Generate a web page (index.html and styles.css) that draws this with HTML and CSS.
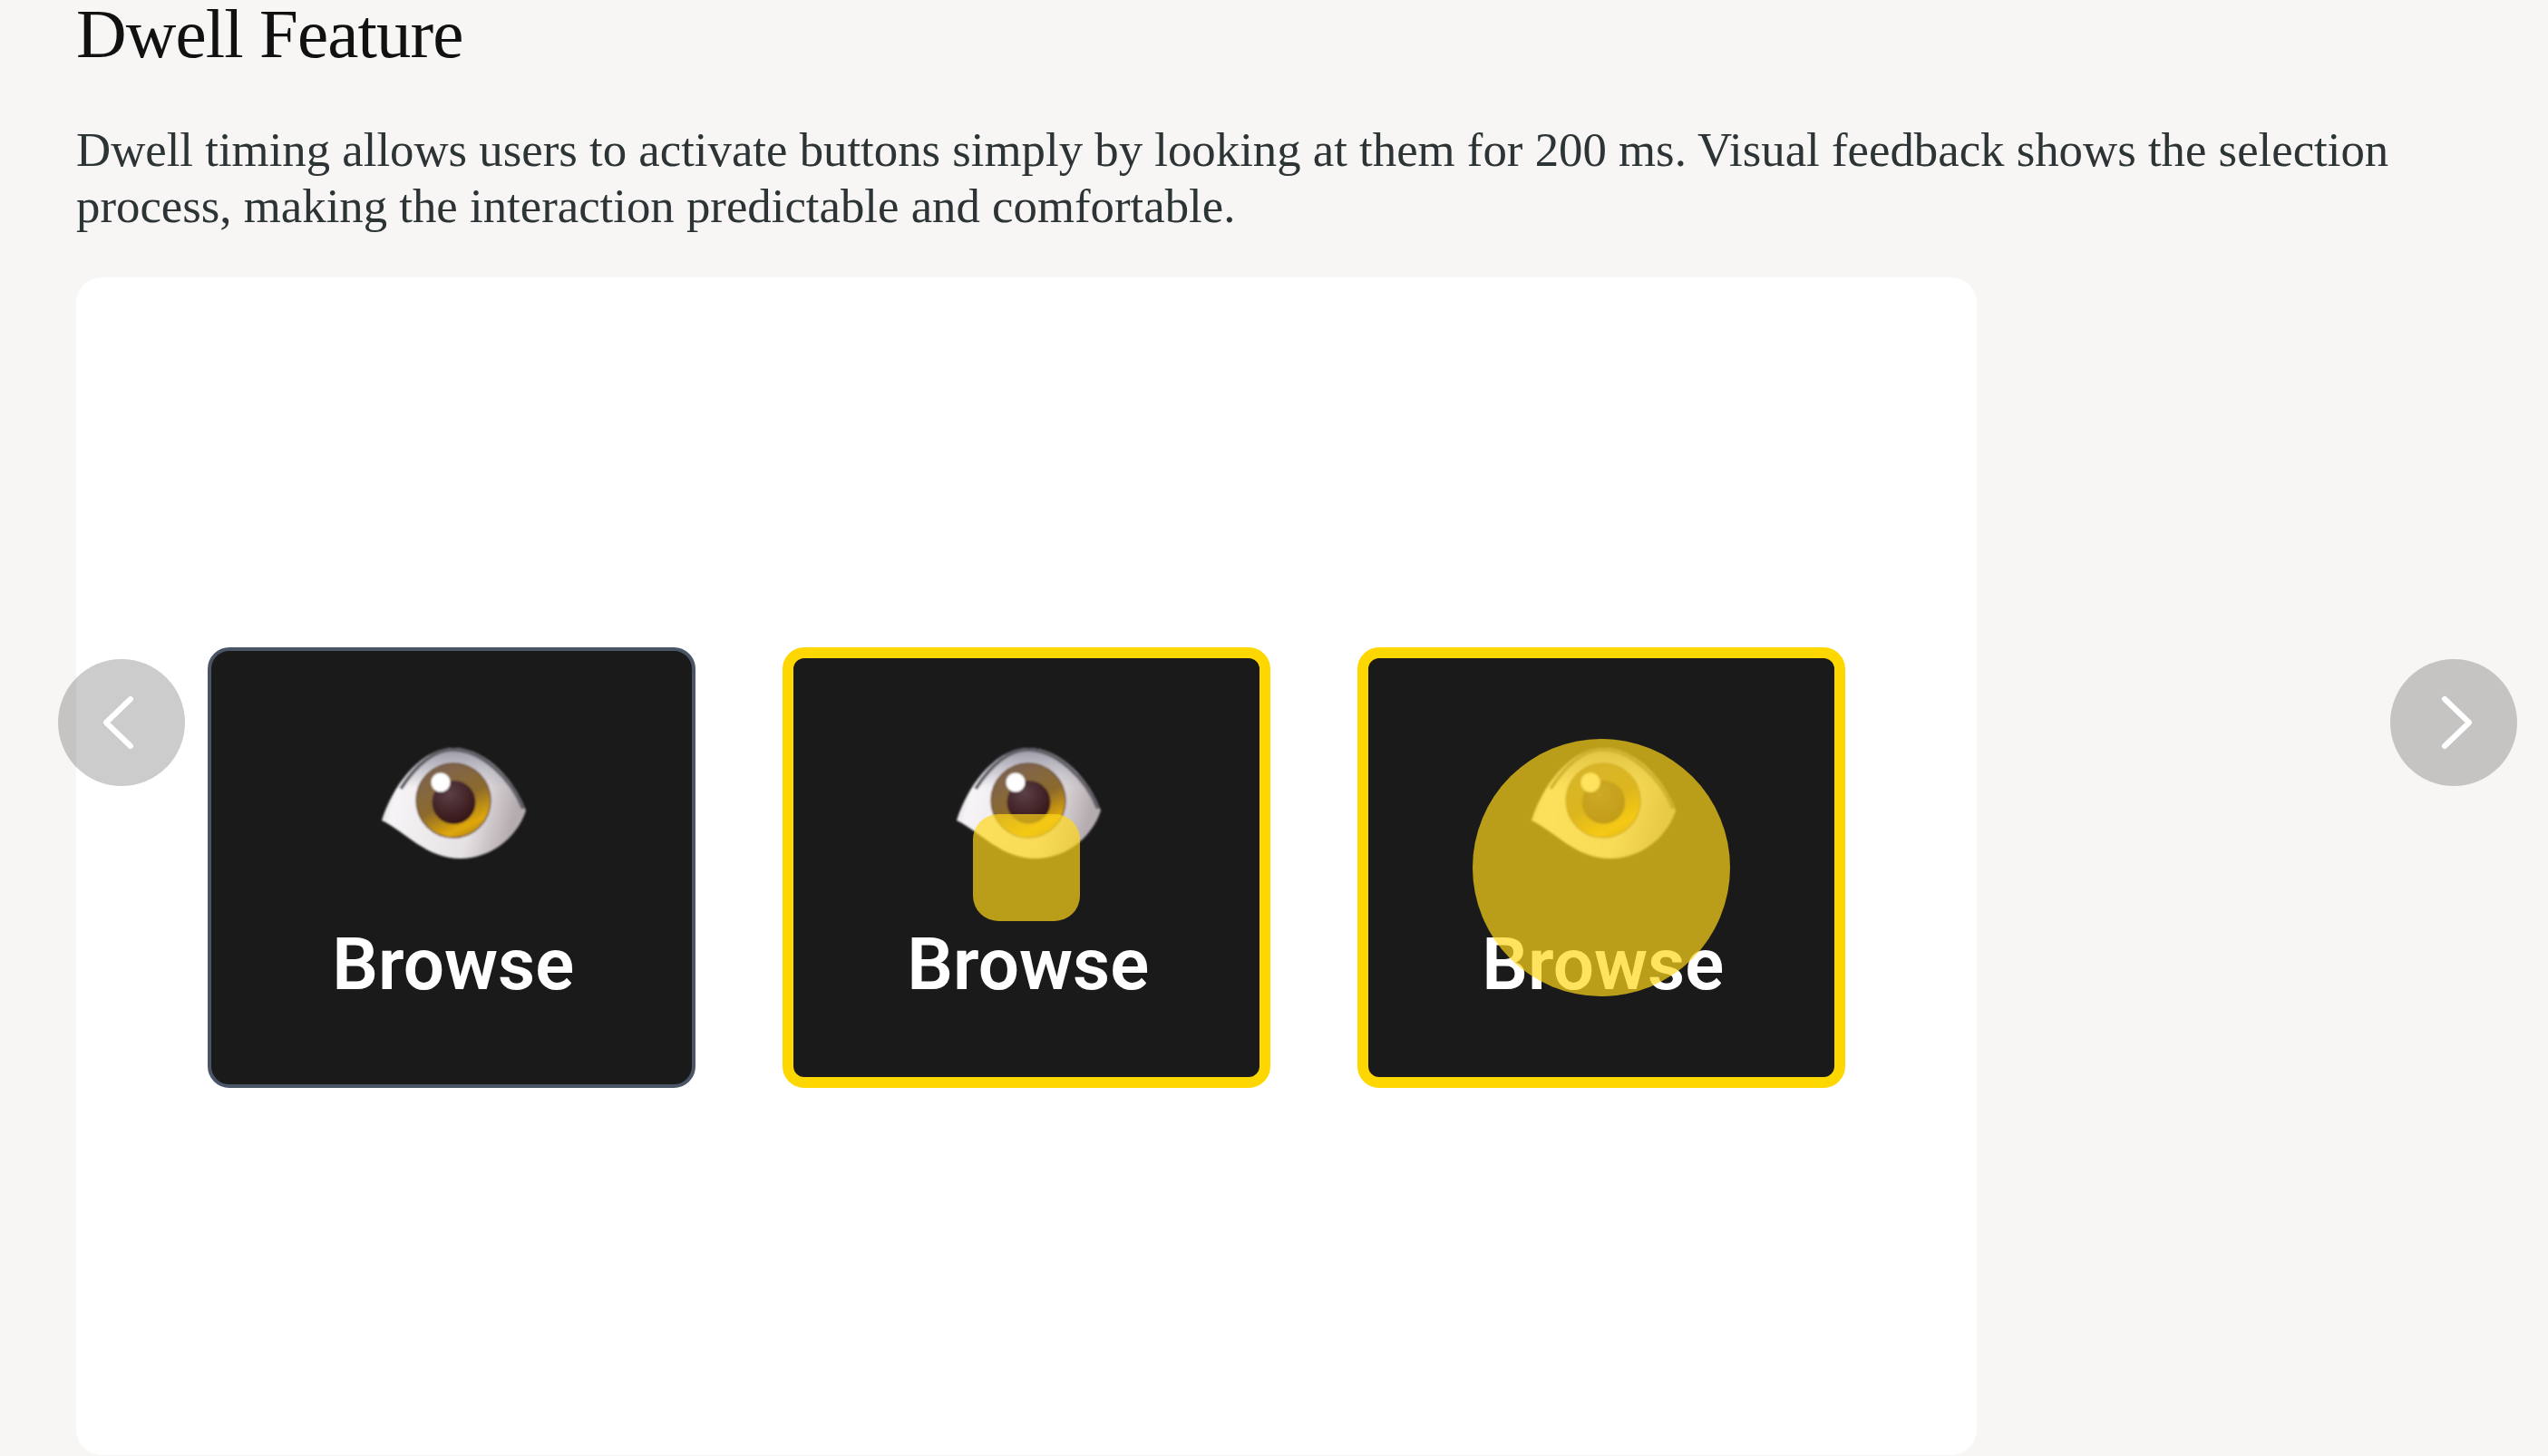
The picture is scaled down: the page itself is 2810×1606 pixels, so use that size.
FILE: index.html
```html
<!DOCTYPE html>
<html>
<head>
	<title>Dwell Feature</title>
	<link rel="stylesheet" href="styles.css">
</head>
<body>

	<svg class="defs" width="0" height="0">
		<defs>
			<linearGradient id="eyeWhite" x1="0" y1="0" x2="1" y2="0.2">
				<stop offset="0" stop-color="#c8c5c9"/>
				<stop offset="0.18" stop-color="#f6f4f6"/>
				<stop offset="0.72" stop-color="#e6e2e4"/>
				<stop offset="1" stop-color="#b5acb0"/>
			</linearGradient>
			<linearGradient id="eyeLid" x1="0" y1="0" x2="0" y2="1">
				<stop offset="0.05" stop-color="#a5a3b0"/>
				<stop offset="0.36" stop-color="#a5a3b0" stop-opacity="0"/>
			</linearGradient>
			<linearGradient id="eyeIris" x1="0.25" y1="0.05" x2="0.7" y2="1">
				<stop offset="0" stop-color="#7d6350"/>
				<stop offset="0.5" stop-color="#8c6a2c"/>
				<stop offset="0.85" stop-color="#e0a806"/>
				<stop offset="1" stop-color="#b88a10"/>
			</linearGradient>
			<radialGradient id="eyePupil" cx="0.4" cy="0.3" r="0.8">
				<stop offset="0" stop-color="#5b3f46"/>
				<stop offset="1" stop-color="#300f10"/>
			</radialGradient>
			<filter id="eyeSoft" x="-10%" y="-10%" width="120%" height="120%">
				<feGaussianBlur stdDeviation="1.3"/>
			</filter>
			<symbol id="eye" viewBox="0 0 240 170">
				<g filter="url(#eyeSoft)">
					<path d="M41 105C52 70 80 28 118 25C155 24 188 60 200 94C190 125 160 147 128 147C90 147 68 118 41 105Z" fill="url(#eyeWhite)"/>
					<path d="M41 105C52 70 80 28 118 25C155 24 188 60 200 94C190 125 160 147 128 147C90 147 68 118 41 105Z" fill="url(#eyeLid)"/>
					<path d="M62 70C80 42 100 27 118 27C152 26 184 60 197 92" fill="none" stroke="#5f5d65" stroke-width="4"/>
					<circle cx="120" cy="83" r="41" fill="url(#eyeIris)" stroke="#6e5032" stroke-width="1.5"/>
					<circle cx="120.5" cy="85" r="24" fill="url(#eyePupil)"/>
					<circle cx="106" cy="63" r="10.5" fill="#fff"/>
				</g>
			</symbol>
		</defs>
	</svg>

	<h1 class="title">Dwell Feature</h1>
	<p class="intro">Dwell timing allows users to activate buttons simply by looking at them for 200 ms. Visual feedback shows the selection process, making the interaction predictable and comfortable.</p>

	<div class="carousel">
		<button class="arrow arrowLeft">
			<svg width="40" height="68" viewBox="0 0 40 68"><path d="M30 8L3 34L30 60"/></svg>
		</button>

		<div class="panel">
			<div class="tile">
				<svg class="tileEye"><use href="#eye"/></svg>
				<span class="tileLabel">Browse</span>
			</div>
			<div class="tile tileActive">
				<svg class="tileEye"><use href="#eye"/></svg>
				<span class="tileLabel">Browse</span>
				<div class="dwell dwellStart"></div>
			</div>
			<div class="tile tileActive">
				<svg class="tileEye"><use href="#eye"/></svg>
				<span class="tileLabel">Browse</span>
				<div class="dwell dwellEnd"></div>
			</div>
		</div>

		<button class="arrow arrowRight">
			<svg width="40" height="68" viewBox="0 0 40 68"><path d="M10 8L37 34L10 60"/></svg>
		</button>
	</div>

</body>
</html>
```

FILE: styles.css
```css
html, body{
	height: 100%;
}

body{
	margin: 0;
	padding: 0 84px;
	background-color: #f7f6f4;
	overflow: hidden;
	font-family: "Liberation Serif", serif;
}

.defs{
	display: block;
	height: 0;
}

.title{
	margin: 0;
	font-size: 77px;
	line-height: 74px;
	font-weight: 400;
	letter-spacing: -0.9px;
	color: #111;
}

.intro{
	margin: 60px 0 0;
	width: 2600px;
	font-size: 52.8px;
	line-height: 62px;
	color: #2d3436;
}

.carousel{
	position: relative;
	margin-top: 48px;
}

.panel{
	display: flex;
	align-items: center;
	gap: 96.5px;
	box-sizing: border-box;
	width: 2096px;
	height: 1299px;
	padding: 3px 0 0 145px;
	background-color: #fff;
	border-radius: 28px;
}

.tile{
	position: relative;
	display: flex;
	flex-direction: column;
	align-items: center;
	box-sizing: border-box;
	width: 537.5px;
	height: 486px;
	padding: 82px 0 0 4px;
	background-color: #1a1a1a;
	border: 4px solid #4a5568;
	border-radius: 24px;
}

.tileActive{
	padding: 74px 0 0 4px;
	border: 12px solid #ffd700;
}

.tileEye{
	display: block;
	width: 240px;
	height: 170px;
}

.tileLabel{
	margin-top: 47px;
	font-family: Roboto, sans-serif;
	font-size: 80px;
	font-weight: 600;
	line-height: 94px;
	color: #fff;
}

.dwell{
	position: absolute;
	top: 50%;
	left: 50%;
	transform: translate(-50%, -50%);
	background-color: #ffd71a;
	opacity: 0.7;
}

.dwellStart{
	width: 118px;
	height: 118px;
	border-radius: 28px;
}

.dwellEnd{
	width: 284px;
	height: 284px;
	border-radius: 50%;
}

.arrow{
	position: absolute;
	top: 421px;
	display: flex;
	align-items: center;
	justify-content: center;
	width: 140px;
	height: 140px;
	padding: 0;
	background-color: rgba(0, 0, 0, 0.2);
	border: 0;
	border-radius: 50%;
}

.arrow path{
	fill: none;
	stroke: #fff;
	stroke-width: 6;
	stroke-linecap: round;
	stroke-linejoin: round;
}

.arrowLeft{
	left: -20px;
}

.arrowRight{
	left: 2552px;
}
```
